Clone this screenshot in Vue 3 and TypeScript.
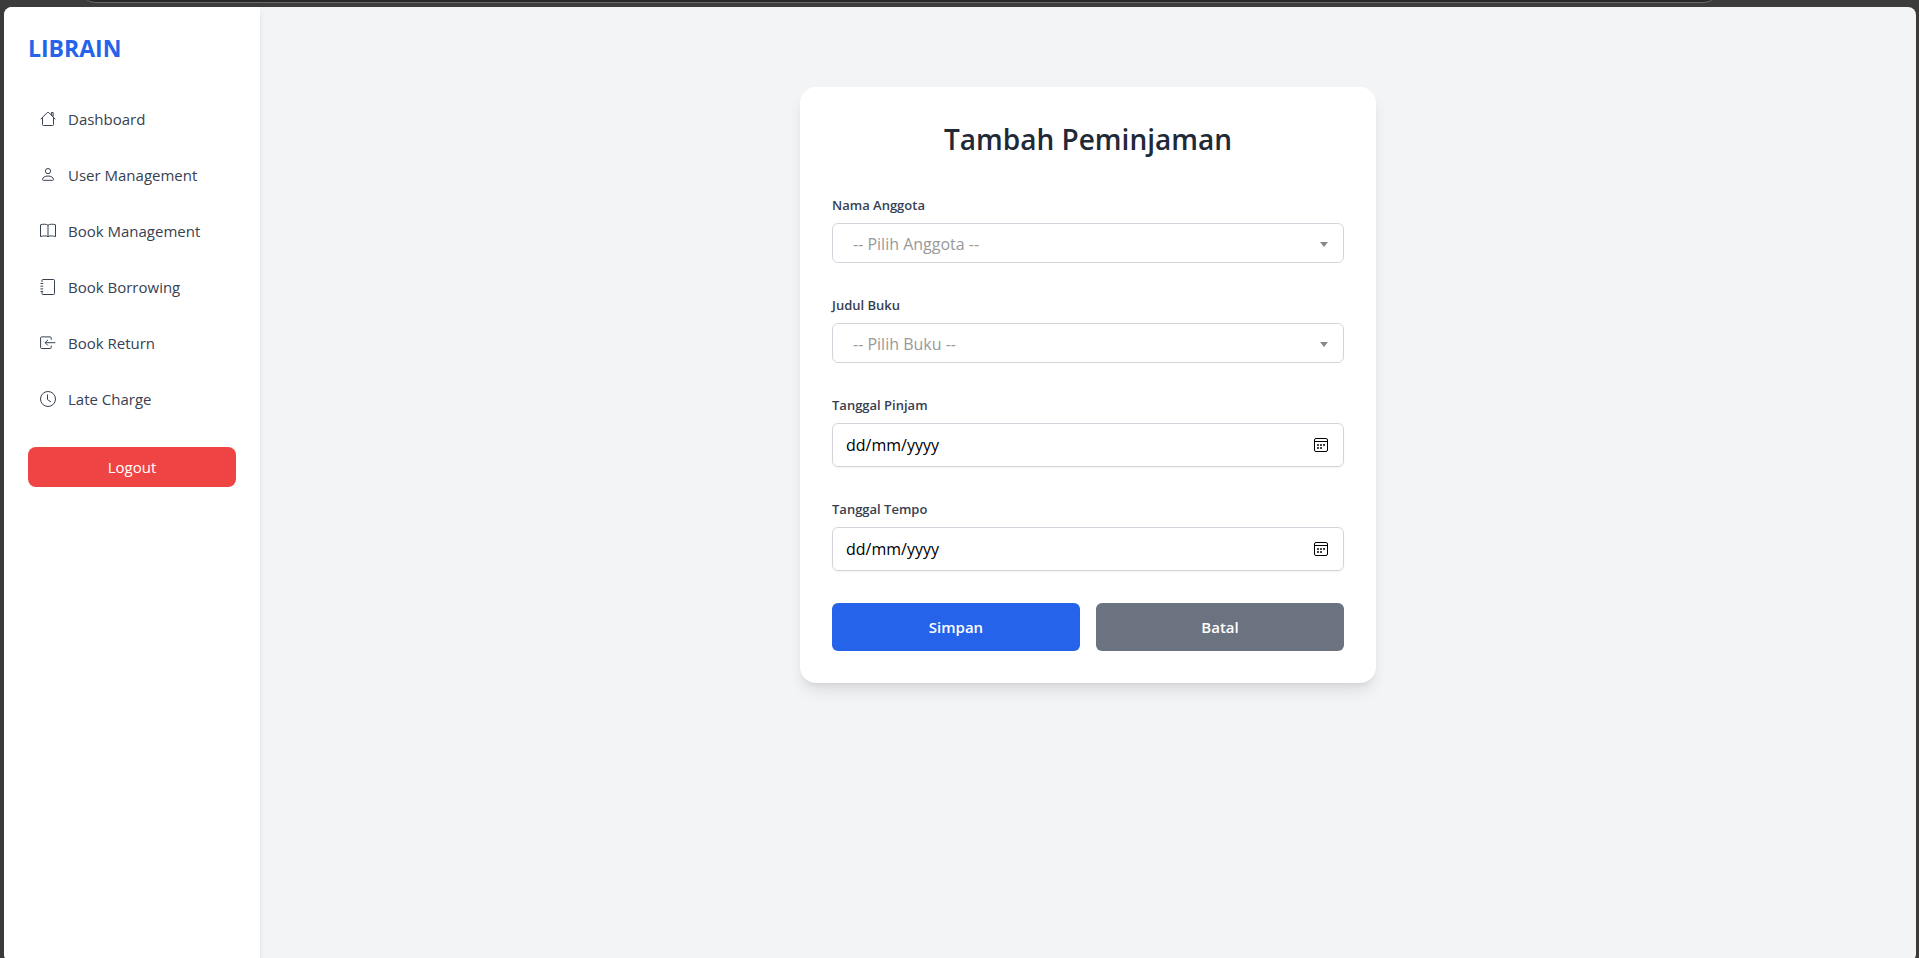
<script setup lang="ts">
import { ref } from 'vue'

interface NavItem {
  label: string
  paths: string[]
}

const navItems: NavItem[] = [
  {
    label: 'Dashboard',
    paths: ['M.6 8.3 7.2 1.6Q8 .9 8.8 1.6L15.4 8.3', 'M2.5 6.6V13.5Q2.5 14.5 3.5 14.5H12.5Q13.5 14.5 13.5 13.5V6.6', 'M11.4 1.5H13.1V5.6L11.4 4Z'],
  },
  {
    label: 'User Management',
    paths: ['M8 1.5A2.6 2.6 0 1 1 8 6.7A2.6 2.6 0 1 1 8 1.5', 'M2.5 12.5C2.5 10.6 4.8 9 8 9S13.5 10.6 13.5 12.5Q13.5 13.3 12.7 13.3H3.3Q2.5 13.3 2.5 12.5Z'],
  },
  {
    label: 'Book Management',
    paths: ['M8 2.2C6.2.9 2.8 1 .5 1.8V13.6C3 12.7 6.4 12.6 8 13.6C9.6 12.6 13 12.7 15.5 13.6V1.8C13.2 1 9.8.9 8 2.2Z', 'M8 2.2V13.6'],
  },
  {
    label: 'Book Borrowing',
    paths: ['M2 3V1.5Q2 .5 3 .5H13.5Q14.5.5 14.5 1.5V14.5Q14.5 15.5 13.5 15.5H3Q2 15.5 2 14.5V13', 'M.5 4.5H3.2M.5 7.2H3.2M.5 9.9H3.2M.5 12.4H3.2'],
  },
  {
    label: 'Book Return',
    paths: ['M11.2 4.8V2.9Q11.2 1.9 10.2 1.9H1.6Q.6 1.9.6 2.9V12.5Q.6 13.5 1.6 13.5H10.2Q11.2 13.5 11.2 12.5V10.6', 'M15.3 7.7H5.2M8 4.8 5.1 7.7 8 10.6'],
  },
  {
    label: 'Late Charge',
    paths: ['M8 .5A7.5 7.5 0 1 1 8 15.5A7.5 7.5 0 1 1 8 .5', 'M7.5 3.5V8.6L11 10.9'],
  },
]

const member = ref('')
const book = ref('')
const borrowDate = ref('')
const dueDate = ref('')
</script>

<template>
  <div class="window">
    <div class="toolbar"><div class="address"></div></div>
    <div class="page">
      <aside class="sidebar">
        <h1 class="brand">LIBRAIN</h1>
        <nav class="nav">
          <a v-for="item in navItems" :key="item.label" class="nav-link" href="#">
            <svg class="nav-icon" viewBox="0 0 16 16" aria-hidden="true">
              <path v-for="d in item.paths" :key="d" :d="d" />
            </svg>
            <span>{{ item.label }}</span>
          </a>
        </nav>
        <button class="logout" type="button">Logout</button>
      </aside>

      <main class="main">
        <form class="card" @submit.prevent>
          <h2 class="title">Tambah Peminjaman</h2>

          <div class="field">
            <label for="member">Nama Anggota</label>
            <div class="control">
              <select id="member" v-model="member" class="select">
                <option value="">-- Pilih Anggota --</option>
              </select>
              <svg class="caret" viewBox="0 0 8 5" aria-hidden="true"><path d="M0 0H8L4 5Z" /></svg>
            </div>
          </div>

          <div class="field">
            <label for="book">Judul Buku</label>
            <div class="control">
              <select id="book" v-model="book" class="select">
                <option value="">-- Pilih Buku --</option>
              </select>
              <svg class="caret" viewBox="0 0 8 5" aria-hidden="true"><path d="M0 0H8L4 5Z" /></svg>
            </div>
          </div>

          <div class="field">
            <label for="borrow-date">Tanggal Pinjam</label>
            <div class="date">
              <input id="borrow-date" v-model="borrowDate" type="text" placeholder="dd/mm/yyyy" />
              <button type="button" class="picker" aria-label="Pilih tanggal pinjam">
                <svg viewBox="0 0 14 14" aria-hidden="true">
                  <rect x=".5" y=".5" width="13" height="13" rx="1.5" />
                  <path d="M1 3.5H13" />
                  <path class="days" d="M3 7H5M6 7H8M9 7H11M3 10H5M6 10H8" />
                </svg>
              </button>
            </div>
          </div>

          <div class="field">
            <label for="due-date">Tanggal Tempo</label>
            <div class="date">
              <input id="due-date" v-model="dueDate" type="text" placeholder="dd/mm/yyyy" />
              <button type="button" class="picker" aria-label="Pilih tanggal tempo">
                <svg viewBox="0 0 14 14" aria-hidden="true">
                  <rect x=".5" y=".5" width="13" height="13" rx="1.5" />
                  <path d="M1 3.5H13" />
                  <path class="days" d="M3 7H5M6 7H8M9 7H11M3 10H5M6 10H8" />
                </svg>
              </button>
            </div>
          </div>

          <div class="actions">
            <button type="submit" class="btn save">Simpan</button>
            <button type="button" class="btn cancel">Batal</button>
          </div>
        </form>
      </main>
    </div>
  </div>
</template>

<style>
body {
  margin: 0;
}
</style>

<style scoped>
* {
  box-sizing: border-box;
}

.window {
  display: flex;
  flex-direction: column;
  height: 100vh;
  padding: 0 3px 0 4px;
  overflow: hidden;
  background: #3b3a38;
  font-family: "Open Sans", "Noto Sans", sans-serif;
  font-size: 15px;
  line-height: 24px;
}

.toolbar {
  flex: none;
  height: 7px;
  margin: 0 -3px 0 -4px;
  overflow: hidden;
  background: #3c3c3c;
}

.address {
  height: 30px;
  margin: -27px 200px 0 80px;
  border: 1px solid #696969;
  border-radius: 15px;
  background: #282828;
}

.page {
  display: flex;
  flex: 1;
  margin-bottom: -4px;
  overflow: hidden;
  border-radius: 8px;
  background: #f3f4f6;
}

.sidebar {
  flex: none;
  width: 256px;
  padding: 24px;
  background: #fff;
  box-shadow: 0 4px 6px -1px rgb(0 0 0 / 10%), 0 2px 4px -2px rgb(0 0 0 / 10%);
}

.brand {
  margin: 0 0 30px;
  color: #2563eb;
  font-size: 23px;
  font-weight: 700;
  line-height: 34px;
}

.nav {
  display: flex;
  flex-direction: column;
  gap: 8px;
}

.nav-link {
  display: flex;
  align-items: center;
  gap: 12px;
  padding: 12px;
  color: #374151;
  text-decoration: none;
}

.nav-icon {
  width: 16px;
  height: 16px;
  fill: none;
  stroke: currentColor;
  stroke-linejoin: round;
}

.logout {
  width: 100%;
  height: 40px;
  margin-top: 24px;
  padding: 0;
  border: 0;
  border-radius: 8px;
  background: #ef4444;
  color: #fff;
  font: inherit;
}

.main {
  flex: 1;
  padding: 80px 32px 32px;
}

.card {
  max-width: 576px;
  margin: 0 auto;
  padding: 32px;
  border-radius: 16px;
  background: #fff;
  box-shadow: 0 10px 15px -3px rgb(0 0 0 / 10%), 0 4px 6px -4px rgb(0 0 0 / 10%);
}

.title {
  margin: 0 0 36px;
  color: #1f2937;
  font-size: 28px;
  font-weight: 600;
  line-height: 40px;
  text-align: center;
}

.field {
  margin-bottom: 32px;
}

.field label {
  display: block;
  margin-bottom: 8px;
  color: #374151;
  font-size: 13px;
  font-weight: 600;
  line-height: 20px;
}

.control {
  position: relative;
}

.select {
  display: block;
  width: 100%;
  height: 40px;
  padding: 2px 32px 0 20px;
  border: 1px solid #d1d5db;
  border-radius: 6px;
  appearance: none;
  background: #fff;
  color: #999;
  font: inherit;
  font-size: 16px;
}

.caret {
  position: absolute;
  top: 19px;
  right: 16px;
  width: 8px;
  height: 5px;
  fill: #888;
  pointer-events: none;
}

.date {
  display: flex;
  align-items: center;
  height: 44px;
  padding: 0 13px;
  border: 1px solid #d1d5db;
  border-radius: 6px;
  box-shadow: 0 1px 2px rgb(0 0 0 / 5%);
}

.date input {
  flex: 1;
  min-width: 0;
  padding: 0;
  border: 0;
  outline: 0;
  background: none;
  color: #000;
  font: inherit;
  font-size: 16px;
}

.date input::placeholder {
  color: #000;
  opacity: 1;
}

.picker {
  display: flex;
  padding: 2px;
  border: 0;
  background: none;
}

.picker svg {
  width: 14px;
  height: 14px;
  fill: none;
  stroke: #000;
}

.picker .days {
  stroke: #444;
  stroke-width: 2;
}

.actions {
  display: grid;
  grid-template-columns: 1fr 1fr;
  gap: 16px;
}

.btn {
  height: 48px;
  padding: 0;
  border: 0;
  border-radius: 6px;
  color: #fff;
  font: inherit;
  font-weight: 600;
}

.save {
  background: #2563eb;
}

.cancel {
  background: #6b7280;
}
</style>
